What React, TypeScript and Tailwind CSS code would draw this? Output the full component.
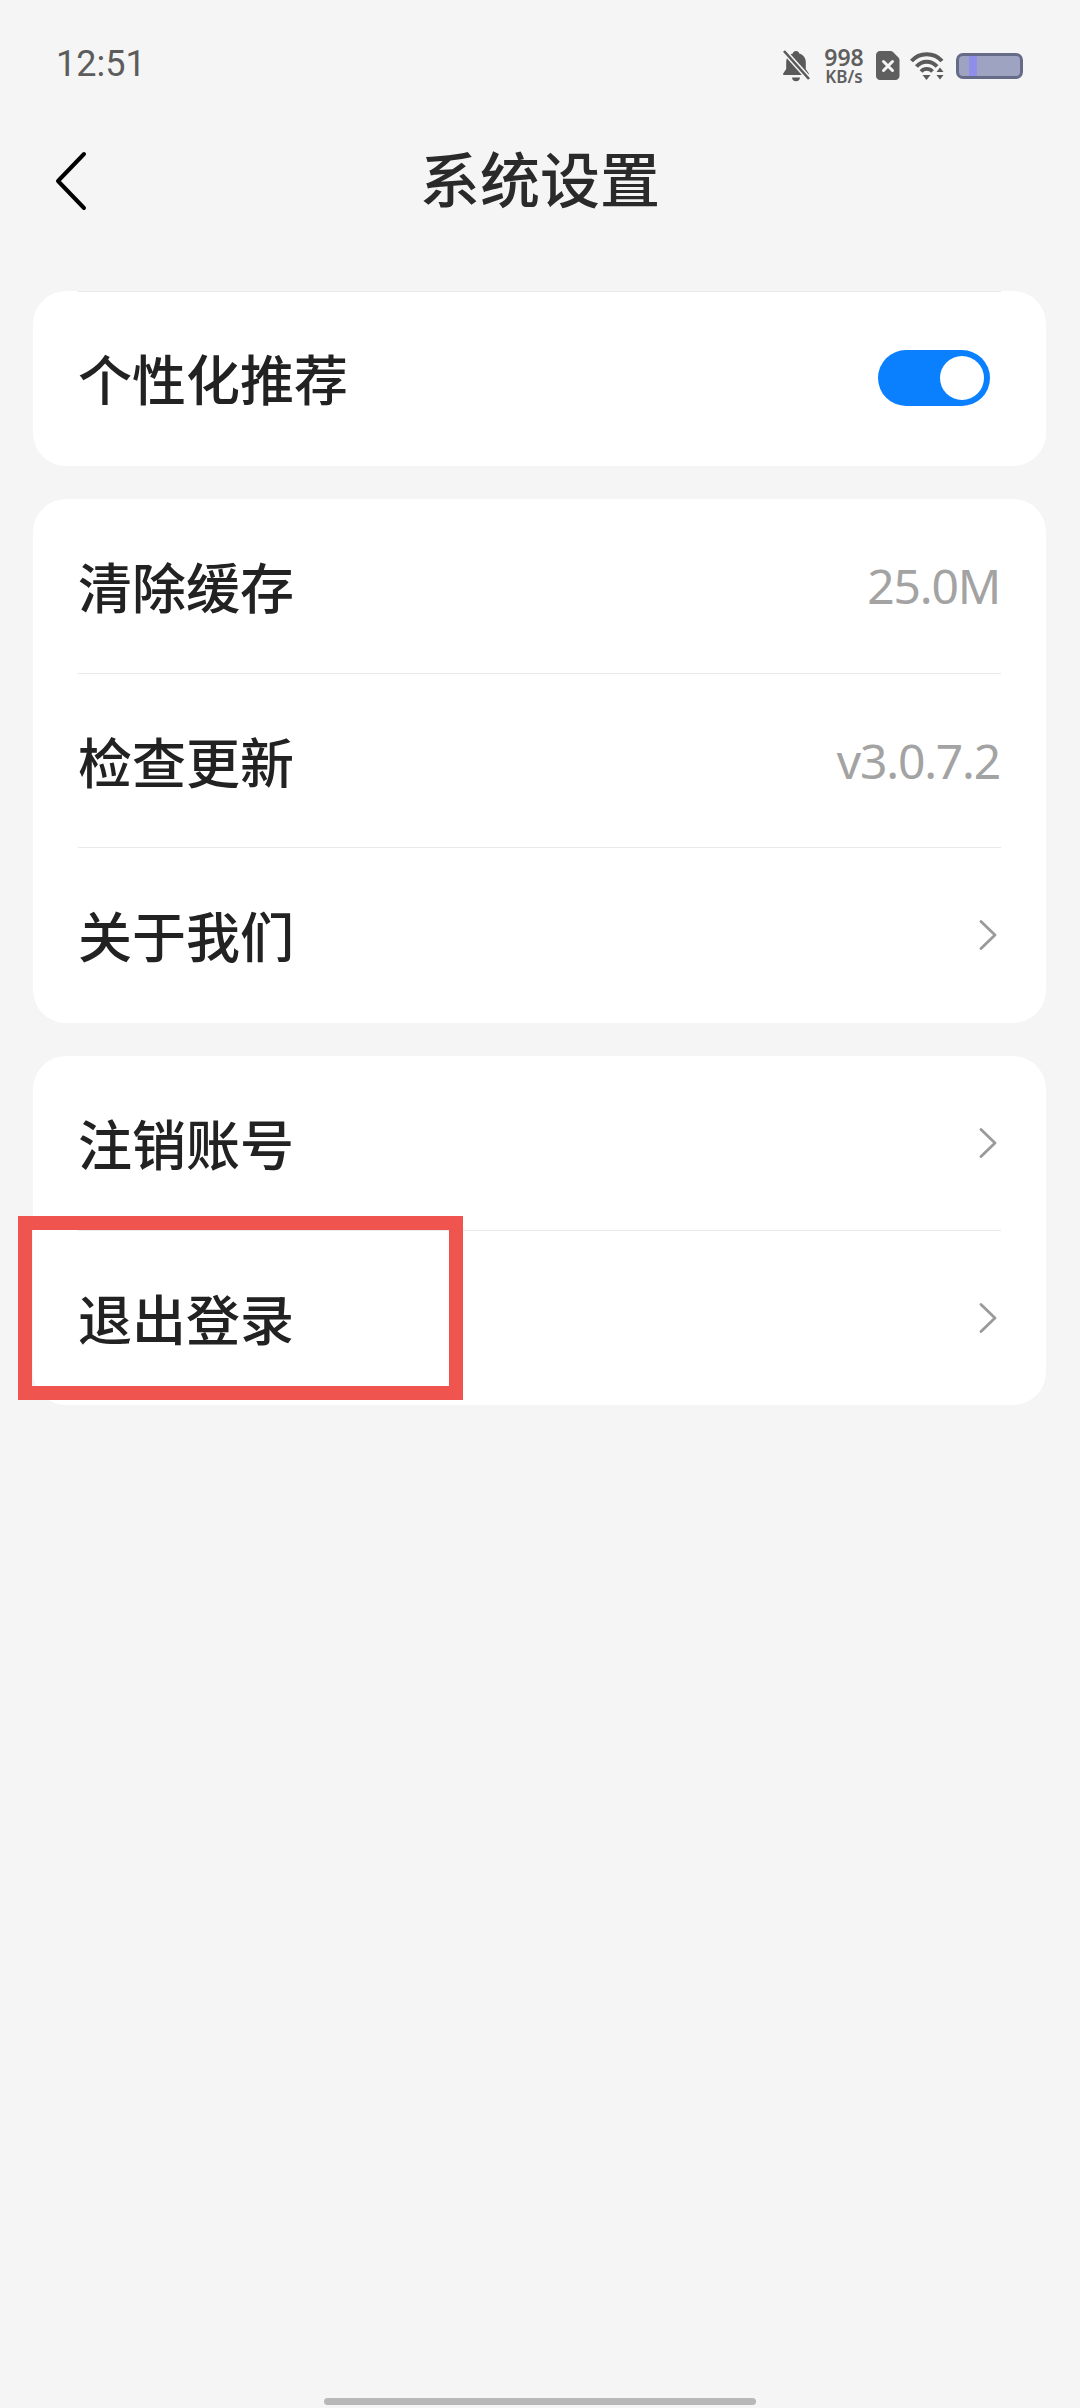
const cjk = { fontFamily: '"Noto Sans CJK SC", "Noto Sans", sans-serif' };

function Chevron() {
  return (
    <svg width="18" height="30" viewBox="0 0 18 30" fill="none" className="mr-[3px]">
      <path d="M2 1.500 L16 15 L2 28.500" stroke="#9a9a9a" strokeWidth="2.800" strokeLinecap="round" strokeLinejoin="round" />
    </svg>
  );
}

function Row({ label, children, divider }: { label: string; children?: React.ReactNode; divider?: boolean }) {
  return (
    <div className="relative flex h-[174.5px] items-center justify-between pr-[46px] pl-[45px]">
      <span className="text-[54px] leading-none font-medium text-[#222222]" style={cjk}>
        {label}
      </span>
      {children}
      {divider && <div className="absolute right-[45px] bottom-0 left-[45px] h-[1px] bg-[#e9e9e9]" />}
    </div>
  );
}

function Value({ text }: { text: string }) {
  return <span className="font-['Noto_Sans'] text-[48px] leading-none tracking-[-1.2px] text-[#a3a3a3]">{text}</span>;
}

function StatusIcons() {
  return (
    <div className="flex items-center">
      <svg width="30" height="32" viewBox="0 0 30 32" fill="#5a5a5a">
        <path d="M15 1c1.800 0 3 1.100 3.200 2.600 4.200 1.100 6.600 4.500 6.600 9v6.500l3 4.400v1.500H2.200v-1.500l3-4.400v-6.500c0-4.500 2.400-7.900 6.600-9C12 2.100 13.200 1 15 1z" />
        <path d="M11 27.500h8c0 2.200-1.700 3.800-4 3.800s-4-1.600-4-3.800z" />
        <path d="M3 1 L28 29" stroke="#f5f5f5" strokeWidth="5.500" />
        <path d="M3 1 L28 29" stroke="#5a5a5a" strokeWidth="2.600" />
      </svg>
      <div className="ml-[12px] flex w-[42px] flex-col items-center font-['Noto_Sans'] font-semibold text-[#5f5f5f]">
        <span className="text-[23px] leading-[22px]">998</span>
        <span className="text-[17px] leading-[17px]">KB/s</span>
      </div>
      <svg width="24" height="29" viewBox="0 0 24 29" className="ml-[11px]">
        <path d="M4 0h10.500c1 0 1.800.4 2.500 1l5.500 5.500c.7.7 1 1.500 1 2.500v16c0 2.200-1.800 4-4 4H4c-2.200 0-4-1.800-4-4V4c0-2.200 1.800-4 4-4z" fill="#5f5f5f" />
        <path d="M7.500 10.500l9 9M16.500 10.500l-9 9" stroke="#f5f5f5" strokeWidth="3" strokeLinecap="round" />
      </svg>
      <svg width="36" height="30" viewBox="0 0 36 30" fill="none" className="ml-[10px]">
        <path d="M1.500 10C9.500 1 24 1 32 10" stroke="#5a5a5a" strokeWidth="4" />
        <path d="M6.500 15.500C12 9 21.500 9 27 15.500" stroke="#5a5a5a" strokeWidth="4" />
        <path d="M11 20.500c3-3.500 8.500-3.500 11.500 0" stroke="#5a5a5a" strokeWidth="3.600" />
        <path d="M12.500 24h8l-4 5z" fill="#5a5a5a" />
        <path d="M30 16.500l3.500 4.500h-7zM26.500 24h7L30 28.500z" fill="#5a5a5a" />
      </svg>
      <div className="ml-[10px] flex h-[26px] w-[67px] items-stretch rounded-[7px] border-[3px] border-[#666c88] bg-[#9ea3c2] pl-[10px]">
        <div className="w-[8px] bg-[#8f8feb]" />
      </div>
    </div>
  );
}

export default function App() {
  return (
    <div className="flex h-[2408px] w-[1080px] flex-col overflow-hidden bg-[#f5f5f5]">
      <div className="flex h-[126px] items-start justify-between pt-[46px] pr-[57px] pl-[56px]">
        <span className="font-['Roboto'] text-[36px] leading-[36px] text-[#5c5c5c]">12:51</span>
        <StatusIcons />
      </div>

      <div className="relative flex h-[110px] items-center justify-center">
        <svg width="34" height="60" viewBox="0 0 34 60" fill="none" className="absolute top-[25px] left-[54px]">
          <path d="M30 3 L4 30 L30 57" stroke="#000000" strokeWidth="4" strokeLinecap="round" strokeLinejoin="round" />
        </svg>
        <h1 className="mb-[8px] text-[60px] leading-none font-medium text-[#2a2a2a]" style={cjk}>
          系统设置
        </h1>
      </div>

      <div className="mt-[55px] flex flex-col gap-[33.5px] pr-[34px] pl-[33px]">
        <div className="relative rounded-[33px] bg-white">
          <div className="absolute top-0 right-[45px] left-[45px] h-[1px] bg-[#e9e9e9]" />
          <Row label="个性化推荐">
            <div className="mr-[10px] flex h-[56px] w-[112px] items-center justify-end rounded-full bg-[#0a80ff] pr-[6px]">
              <div className="h-[44px] w-[44px] rounded-full bg-white" />
            </div>
          </Row>
        </div>

        <div className="rounded-[33px] bg-white">
          <Row label="清除缓存" divider>
            <Value text="25.0M" />
          </Row>
          <Row label="检查更新" divider>
            <Value text="v3.0.7.2" />
          </Row>
          <Row label="关于我们">
            <Chevron />
          </Row>
        </div>

        <div className="relative rounded-[33px] bg-white">
          <Row label="注销账号" divider>
            <Chevron />
          </Row>
          <Row label="退出登录">
            <Chevron />
          </Row>
          <div className="absolute top-[160px] left-[-15px] h-[184px] w-[445px] border-[14px] border-[#f0544f]" />
        </div>
      </div>

      <div className="mt-auto mb-[3px] flex justify-center">
        <div className="h-[7px] w-[432px] rounded-full bg-[#b8b8b8]" />
      </div>
    </div>
  );
}
